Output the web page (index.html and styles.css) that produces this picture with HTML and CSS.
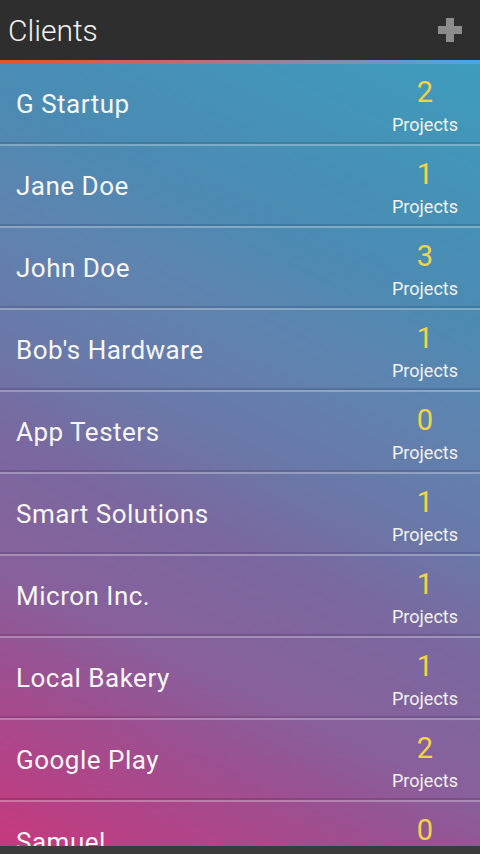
FILE: index.html
```html
<!doctype html>
<html lang="en">
  <head>
    <meta charset="UTF-8" />
    <meta name="viewport" content="width=device-width, initial-scale=1.0" />
    <title>Clients</title>
    <link rel="stylesheet" href="styles.css">
  </head>
  <body>
    <div class="app">
      <header class="topbar">
        <h1>Clients</h1>
        <button class="add" aria-label="Add client">
          <svg width="26" height="26" viewBox="0 0 26 26">
            <path d="M9 1h8v8h8v8h-8v8H9v-8H1V9h8z" fill="#8c8c8c" />
          </svg>
        </button>
      </header>
      <div class="accent"></div>

      <ul class="clients">
        <li class="client"><span class="name">G Startup</span><div class="count"><span class="num">2</span><span class="label">Projects</span></div></li>
        <li class="client"><span class="name">Jane Doe</span><div class="count"><span class="num">1</span><span class="label">Projects</span></div></li>
        <li class="client"><span class="name">John Doe</span><div class="count"><span class="num">3</span><span class="label">Projects</span></div></li>
        <li class="client"><span class="name">Bob's Hardware</span><div class="count"><span class="num">1</span><span class="label">Projects</span></div></li>
        <li class="client"><span class="name">App Testers</span><div class="count"><span class="num">0</span><span class="label">Projects</span></div></li>
        <li class="client"><span class="name">Smart Solutions</span><div class="count"><span class="num">1</span><span class="label">Projects</span></div></li>
        <li class="client"><span class="name">Micron Inc.</span><div class="count"><span class="num">1</span><span class="label">Projects</span></div></li>
        <li class="client"><span class="name">Local Bakery</span><div class="count"><span class="num">1</span><span class="label">Projects</span></div></li>
        <li class="client"><span class="name">Google Play</span><div class="count"><span class="num">2</span><span class="label">Projects</span></div></li>
        <li class="client"><span class="name">Samuel</span><div class="count"><span class="num">0</span><span class="label">Projects</span></div></li>
      </ul>

      <div class="bottombar"></div>
    </div>
  </body>
</html>
```

FILE: styles.css
```css
html, body {
  margin: 0;
  height: 100%;
}
body {
  font-family: Roboto, "Noto Sans", sans-serif;
  background: #2f2f2f;
  color: #f4f4f4;
}
.app {
  display: flex;
  flex-direction: column;
  height: 854px;
  overflow: hidden;
}
.topbar {
  height: 60px;
  flex: none;
  display: flex;
  align-items: center;
  justify-content: space-between;
  padding: 0 17px 0 8px;
  background: #2e2e2e;
}
.topbar h1 {
  margin: 0;
  font-size: 30px;
  font-weight: 300;
  color: #f2f2f2;
}
.add {
  background: none;
  border: none;
  padding: 0;
  display: flex;
  cursor: pointer;
}
.accent {
  height: 4px;
  flex: none;
  background: linear-gradient(to right, #e4532c 0%, #c26a6e 35%, #8d88a8 65%, #4aa6ea 100%);
}
.clients {
  flex: 1;
  min-height: 0;
  overflow: hidden;
  margin: 0;
  padding: 0;
  list-style: none;
  background: linear-gradient(25deg, #c8387e 0%, #9c4f90 18%, #88609c 27%, #7a68a0 41%, #6a78a8 51%, #5e84b0 64%, #4c8ab2 74%, #3e9cbc 100%);
}
.client {
  height: 80px;
  display: flex;
  align-items: center;
  justify-content: space-between;
  padding: 0 22px 0 16px;
  border-bottom: 2px solid rgba(255, 255, 255, 0.28);
  box-shadow: inset 0 -2px 0 rgba(0, 0, 0, 0.12);
}
.name {
  font-size: 26px;
  letter-spacing: 0.5px;
  color: #f6f6f6;
}
.count {
  display: flex;
  flex-direction: column;
  align-items: center;
  padding-top: 3px;
  line-height: 1;
}
.num {
  font-size: 29px;
  color: #f2d34a;
  margin-bottom: 9px;
}
.label {
  font-size: 18px;
  color: #f2f2f2;
}
.bottombar {
  height: 8px;
  flex: none;
  background: #3b3b3b;
}
```
